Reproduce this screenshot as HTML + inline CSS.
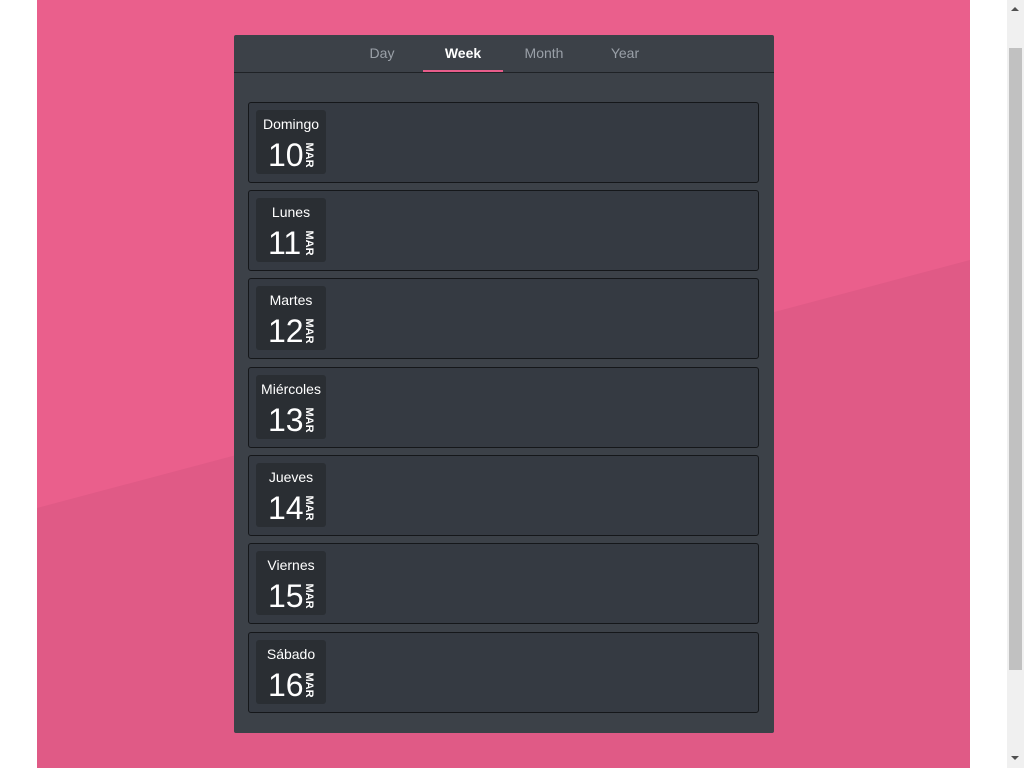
<!DOCTYPE html>
<html><head><meta charset="utf-8"><style>
html,body{margin:0;padding:0;width:1024px;height:768px;overflow:hidden;background:#fff;font-family:"Liberation Sans",sans-serif;}
#bg{position:absolute;left:37px;top:0;width:933px;height:768px;}
#sb{position:absolute;left:1007px;top:0;width:17px;height:768px;background:#f0f0f0;}
#thumb{position:absolute;left:2px;top:48px;width:13px;height:622px;background:#c1c1c1;}
.panel{position:absolute;left:234px;top:35px;width:540px;height:698px;background:#3c4148;border-radius:2px;}
.tabs{height:37px;border-bottom:1px solid #1f2226;position:relative;}
.tab{position:absolute;top:0;height:37px;line-height:36px;font-size:14px;color:#9aa0a8;text-align:center;width:80px;}
.tab.active{color:#fff;font-weight:bold;border-bottom:2px solid #e85c8a;height:35px;}
.card{position:absolute;left:14px;width:509px;height:79px;background:#353a42;border:1px solid #15171a;border-radius:3px;}
.date{position:absolute;left:7px;top:7px;width:70px;height:64px;background:#2a2e33;border-radius:3px;color:#fff;}
.dn{position:absolute;top:6px;left:0;width:70px;text-align:center;font-size:14px;}
.num{position:absolute;left:12px;top:27px;font-size:32px;line-height:36px;}
.mon{position:absolute;left:53px;top:45px;font-size:11px;font-weight:bold;transform:translate(-50%,-50%) rotate(90deg);}
</style></head><body>
<svg id="bg" width="933" height="768"><rect width="933" height="768" fill="#ea5f8c"/><polygon points="0,508 933,260 933,768 0,768" fill="#e05a86"/></svg>
<div id="sb"><div style="position:absolute;left:4px;top:7px;width:0;height:0;border-left:4px solid transparent;border-right:4px solid transparent;border-bottom:4px solid #505050"></div><div id="thumb"></div><div style="position:absolute;left:4px;top:756px;width:0;height:0;border-left:4px solid transparent;border-right:4px solid transparent;border-top:4px solid #505050"></div></div>
<div class="panel">
<div class="tabs">
<div class="tab" style="left:108px">Day</div>
<div class="tab active" style="left:189px">Week</div>
<div class="tab" style="left:270px">Month</div>
<div class="tab" style="left:351px">Year</div>
</div>
<div class="card" style="top:67px"><div class="date"><div class="dn">Domingo</div><div class="num">10</div><div class="mon">MAR</div></div></div>
<div class="card" style="top:155px"><div class="date"><div class="dn">Lunes</div><div class="num">11</div><div class="mon">MAR</div></div></div>
<div class="card" style="top:243px"><div class="date"><div class="dn">Martes</div><div class="num">12</div><div class="mon">MAR</div></div></div>
<div class="card" style="top:332px"><div class="date"><div class="dn">Miércoles</div><div class="num">13</div><div class="mon">MAR</div></div></div>
<div class="card" style="top:420px"><div class="date"><div class="dn">Jueves</div><div class="num">14</div><div class="mon">MAR</div></div></div>
<div class="card" style="top:508px"><div class="date"><div class="dn">Viernes</div><div class="num">15</div><div class="mon">MAR</div></div></div>
<div class="card" style="top:597px"><div class="date"><div class="dn">Sábado</div><div class="num">16</div><div class="mon">MAR</div></div></div>
</div>
</body></html>
